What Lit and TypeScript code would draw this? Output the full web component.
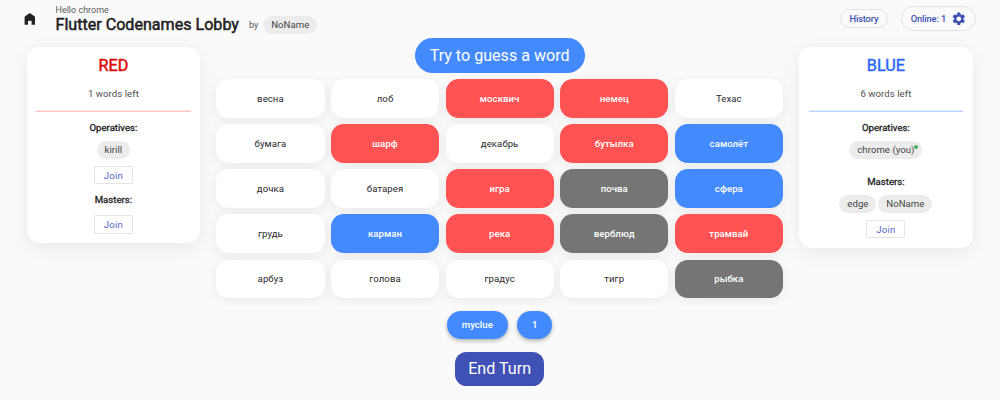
import { LitElement, html, css, nothing } from "lit";
import { customElement, property } from "lit/decorators.js";
import { classMap } from "lit/directives/class-map.js";

type Color = "plain" | "red" | "blue" | "black";

const words: [string, Color][] = [
  ["весна", "plain"], ["лоб", "plain"], ["москвич", "red"], ["немец", "red"], ["Техас", "plain"],
  ["бумага", "plain"], ["шарф", "red"], ["декабрь", "plain"], ["бутылка", "red"], ["самолёт", "blue"],
  ["дочка", "plain"], ["батарея", "plain"], ["игра", "red"], ["почва", "black"], ["сфера", "blue"],
  ["грудь", "plain"], ["карман", "blue"], ["река", "red"], ["верблюд", "black"], ["трамвай", "red"],
  ["арбуз", "plain"], ["голова", "plain"], ["градус", "plain"], ["тигр", "plain"], ["рыбка", "black"],
];

@customElement("player-chip")
export class PlayerChip extends LitElement {
  @property() name = "";
  @property({ type: Boolean }) online = false;

  static styles = css`
    :host {
      position: relative;
      display: flex;
      align-items: center;
      box-sizing: border-box;
      height: 18.2px;
      padding: 0 7.9px;
      border-radius: 10px;
      background: #ececec;
      color: #454545;
      font-size: 9.6px;
      letter-spacing: 0.04px;
      white-space: nowrap;
    }
    .dot {
      position: absolute;
      right: 4px;
      top: 4px;
      width: 4px;
      height: 4px;
      border-radius: 50%;
      background: #4caf50;
    }
  `;

  render() {
    return html`${this.name}${this.online ? html`<span class="dot"></span>` : nothing}`;
  }
}

@customElement("team-card")
export class TeamCard extends LitElement {
  @property() team: "red" | "blue" = "red";
  @property({ type: Number }) left = 0;
  @property({ attribute: false }) operatives: string[] = [];
  @property({ attribute: false }) masters: string[] = [];
  @property() me = "";

  static styles = css`
    :host {
      display: flex;
      flex-direction: column;
      align-items: center;
      box-sizing: border-box;
      width: 173.6px;
      padding: 0 9.6px 9.6px;
      border-radius: 13px;
      background: #fff;
      box-shadow: 0 5px 20px rgba(0, 0, 0, 0.07);
    }
    .name {
      margin-top: 9px;
      font-size: 16.2px;
      line-height: 20px;
      -webkit-text-stroke: 0.5px currentColor;
    }
    .name.red { color: #dd0a0a; }
    .name.blue { color: #2f68ff; }
    .left {
      margin-top: 12px;
      font-size: 9.6px;
      line-height: 12px;
      letter-spacing: 0.06px;
      color: #505050;
    }
    .rule {
      align-self: stretch;
      height: 1px;
      margin-top: 10px;
      border-top: 1px solid;
    }
    .rule.red { border-color: #ffe6e4; background: #ffc4c0; }
    .rule.blue { border-color: #e2eeff; background: #b4d2ff; }
    .role {
      margin-top: 10.2px;
      font-size: 9.6px;
      line-height: 12px;
      color: #222;
      -webkit-text-stroke: 0.3px currentColor;
    }
    .role.masters { margin-top: 9.7px; }
    .role.masters.spaced { margin-top: 17.2px; }
    .chips {
      display: flex;
      gap: 2px;
      margin-top: 6.6px;
    }
    .join {
      box-sizing: border-box;
      width: 39px;
      height: 18.4px;
      margin-top: 7.1px;
      border: 1px solid #e4e4e8;
      border-radius: 2px;
      text-align: center;
      font-size: 9.6px;
      line-height: 17.4px;
      letter-spacing: 0.2px;
      color: #5566c4;
    }
    .join.alone { margin-top: 9px; }
  `;

  private chips(names: string[]) {
    return names.length
      ? html`<div class="chips">
          ${names.map((n) => html`<player-chip
            .name=${n === this.me ? `${n} (you)` : n}
            ?online=${n === this.me}></player-chip>`)}
        </div>`
      : nothing;
  }

  render() {
    const joined = this.operatives.includes(this.me);
    return html`
      <div class="name ${this.team}">${this.team.toUpperCase()}</div>
      <div class="left">${this.left} words left</div>
      <div class="rule ${this.team}"></div>
      <div class="role">Operatives:</div>
      ${this.chips(this.operatives)}
      ${joined ? nothing : html`<div class="join">Join</div>`}
      <div class=${classMap({ role: true, masters: true, spaced: joined })}>Masters:</div>
      ${this.chips(this.masters)}
      <div class=${classMap({ join: true, alone: !this.masters.length })}>Join</div>
    `;
  }
}

@customElement("app-root")
export class AppRoot extends LitElement {
  static styles = css`
    :host {
      display: block;
      box-sizing: border-box;
      height: 400px;
      overflow: hidden;
      background: #fafafa;
      color: #212121;
      font-family: Roboto, sans-serif;
    }
    header {
      display: flex;
      align-items: flex-start;
      height: 37.5px;
      box-sizing: border-box;
      padding: 0 24.4px 0 22px;
    }
    .home {
      width: 15.6px;
      height: 15.6px;
      margin-top: 10.8px;
      fill: #212121;
    }
    .heading { margin: 4.9px 0 0 17.9px; }
    .hello {
      font-size: 9px;
      line-height: 11px;
      color: #5a5a5a;
    }
    .title-row {
      display: flex;
      align-items: center;
      height: 17.4px;
    }
    .title {
      font-size: 16.1px;
      line-height: 18px;
      -webkit-text-stroke: 0.5px currentColor;
    }
    .by {
      margin: 0 5px 0 10px;
      font-size: 9px;
      color: #555;
    }
    .actions {
      display: flex;
      align-items: center;
      gap: 13px;
      margin: 6.2px 0 0 auto;
      color: #3f51b5;
      font-size: 9.3px;
      font-weight: 500;
      letter-spacing: -0.15px;
    }
    .outlined {
      display: flex;
      align-items: center;
      box-sizing: border-box;
      border: 1px solid #e2e2e4;
      border-radius: 13px;
    }
    .history { height: 19.6px; padding: 0 8.7px; }
    .online { height: 24.8px; padding: 0 9px 0 8.8px; gap: 4.6px; }
    .gear { width: 15.6px; height: 15.6px; margin-right: -0.6px; fill: #3f51b5; }
    main {
      display: flex;
      align-items: flex-start;
      justify-content: space-between;
      padding: 0 27.3px 0 26.6px;
    }
    team-card { margin-top: 9.5px; }
    .center {
      display: flex;
      flex-direction: column;
      align-items: center;
      width: 579px;
    }
    .status {
      height: 35.2px;
      padding: 0 15px;
      border-radius: 18px;
      background: #448aff;
      color: #fff;
      font-size: 16.1px;
      line-height: 35.8px;
    }
    .board {
      display: grid;
      grid-template-columns: repeat(5, 1fr);
      grid-auto-rows: 38.7px;
      gap: 6.4px;
      width: 579px;
      box-sizing: border-box;
      padding: 6.5px 6.2px;
      overflow: hidden;
    }
    .card {
      display: flex;
      align-items: center;
      justify-content: center;
      border-radius: 12.8px;
      background: #fff;
      box-shadow: 0 3px 13px rgba(0, 0, 0, 0.065);
      font-size: 9.6px;
      letter-spacing: 0.06px;
      color: #2a2a2a;
    }
    .red, .blue, .black { color: #fff; font-weight: 500; }
    .red { background: #ff5252; }
    .blue { background: #448aff; }
    .black { background: #757575; }
    .clue {
      display: flex;
      gap: 9.6px;
      margin-top: 6.2px;
    }
    .pill {
      height: 28.4px;
      padding: 0 14.8px;
      border-radius: 14.2px;
      background: #448aff;
      box-shadow: 0 2px 4px rgba(0, 0, 0, 0.28);
      color: #fff;
      font-size: 9.6px;
      font-weight: 500;
      line-height: 28.4px;
    }
    .end {
      height: 34.4px;
      margin-top: 12.7px;
      padding: 0 13px;
      border-radius: 11.5px;
      background: #3f51b5;
      color: #fff;
      font-size: 16.1px;
      line-height: 34.4px;
    }
  `;

  render() {
    return html`
      <header>
        <svg class="home" viewBox="0 0 24 24"><path d="M20 21.300h-5.200v-5.500q0-.8-.8-.8h-4q-.8 0-.8.8v5.500H4V9.800q0-1 .8-1.600l6.200-4.300q1-.7 2 0l6.200 4.300q.8.6.8 1.600z" /></svg>
        <div class="heading">
          <div class="hello">Hello chrome</div>
          <div class="title-row">
            <span class="title">Flutter Codenames Lobby</span>
            <span class="by">by</span>
            <player-chip name="NoName"></player-chip>
          </div>
        </div>
        <div class="actions">
          <div class="outlined history">History</div>
          <div class="outlined online">
            Online: 1
            <svg class="gear" viewBox="0 0 24 24"><path d="M19.140 12.940c.040-.300.060-.610.060-.940 0-.320-.020-.640-.070-.940l2.030-1.580c.180-.140.230-.410.120-.610l-1.920-3.320c-.120-.220-.370-.290-.590-.220l-2.390.960c-.500-.380-1.030-.700-1.620-.940l-.360-2.540c-.040-.240-.240-.410-.480-.410h-3.840c-.240 0-.430.170-.470.410l-.360 2.540c-.590.240-1.130.570-1.620.940l-2.390-.960c-.220-.080-.470 0-.590.220L2.740 8.870c-.120.210-.080.470.120.610l2.030 1.580c-.050.300-.090.630-.090.940s.020.640.070.940l-2.030 1.580c-.180.140-.230.410-.120.610l1.920 3.320c.120.220.370.290.590.220l2.390-.960c.500.380 1.030.700 1.620.940l.360 2.540c.050.240.240.410.480.410h3.840c.240 0 .440-.170.470-.410l.360-2.540c.590-.240 1.130-.560 1.620-.940l2.390.960c.220.080.470 0 .590-.220l1.920-3.320c.120-.220.070-.470-.120-.610l-2.010-1.580zM12 15.600c-1.980 0-3.600-1.620-3.600-3.600s1.620-3.600 3.600-3.600 3.600 1.620 3.600 3.600-1.620 3.600-3.600 3.600z" /></svg>
          </div>
        </div>
      </header>
      <main>
        <team-card team="red" left="1" me="chrome" .operatives=${["kirill"]}></team-card>
        <div class="center">
          <div class="status">Try to guess a word</div>
          <div class="board">
            ${words.map(([word, color]) => html`<div class="card ${color}">${word}</div>`)}
          </div>
          <div class="clue">
            <div class="pill">myclue</div>
            <div class="pill">1</div>
          </div>
          <div class="end">End Turn</div>
        </div>
        <team-card team="blue" left="6" me="chrome"
          .operatives=${["chrome"]} .masters=${["edge", "NoName"]}></team-card>
      </main>
    `;
  }
}
